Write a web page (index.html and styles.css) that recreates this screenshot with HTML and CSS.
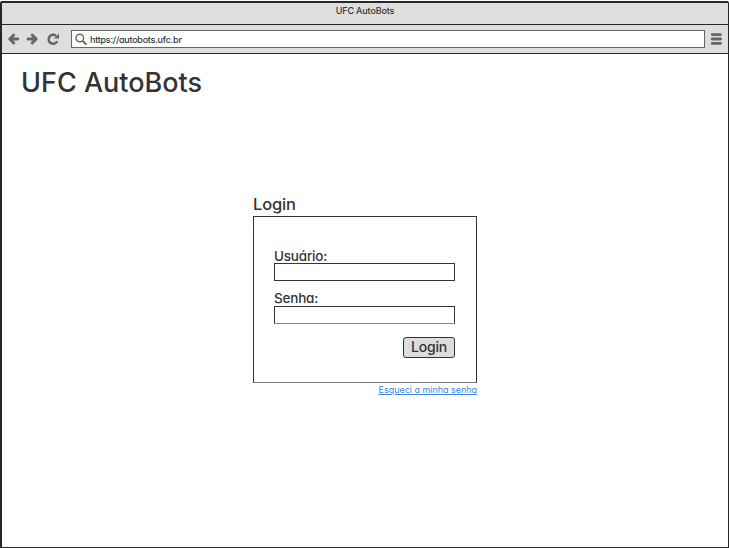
FILE: index.html
```html
<!DOCTYPE html>
<html lang="pt-BR">
<head>
<meta charset="utf-8">
<title>UFC AutoBots</title>
<link rel="stylesheet" href="styles.css">
</head>
<body>
<div class="window">
  <header class="titlebar"><span>UFC AutoBots</span></header>
  <nav class="toolbar">
    <svg class="nav-icons" width="54" height="14" viewBox="0 0 54 14" fill="none" stroke="#666" stroke-width="2.9" stroke-linecap="round" stroke-linejoin="round">
      <path d="M3 7H10.700M6.700 3L2.700 7L6.700 11"/>
      <path d="M21 7H28.500M25.200 3L29.200 7L25.200 11"/>
      <path d="M50.200 9.300A4.500 4.500 0 1 1 49 3.800" stroke-width="2.500" stroke-linecap="butt"/>
      <path d="M52 1.500V6.500H46.800Z" fill="#666" stroke="none"/>
    </svg>
    <div class="address">
      <svg class="search" width="13" height="13" viewBox="0 0 13 13" fill="none" stroke="#666">
        <circle cx="4.800" cy="5" r="3.800" stroke-width="1.400"/>
        <path d="M7.900 8.100L10.800 11" stroke-width="2" stroke-linecap="round"/>
      </svg>
      <span class="url">https://autobots.ufc.br</span>
    </div>
    <svg class="menu" width="12" height="14" viewBox="0 0 12 14" stroke="#666" stroke-width="2.900" stroke-linecap="round">
      <path d="M2.200 2.600H10.500M2.200 7H10.500M2.200 11.400H10.500"/>
    </svg>
  </nav>
  <main class="page">
    <h1>UFC AutoBots</h1>
    <section class="login">
      <h2>Login</h2>
      <form class="panel">
        <label for="user">Usuário:</label>
        <input id="user" type="text">
        <label class="second" for="pass">Senha:</label>
        <input id="pass" type="password">
        <button type="button"><span>Login</span></button>
      </form>
      <a href="#">Esqueci a minha senha</a>
    </section>
  </main>
</div>
</body>
</html>
```
FILE: styles.css
```css
* { box-sizing: border-box; }
body {
  margin: 0;
  padding-top: 1px;
  height: 548px;
  overflow: hidden;
  background: #fff;
  color: #333;
  font-family: Inter, "Liberation Sans", sans-serif;
  font-feature-settings: "cv11";
}
.window {
  height: 547px;
  border: solid #272727;
  border-width: 2px 1px 1px 2px;
  border-radius: 2px 2px 0 0;
}
.titlebar {
  height: 22px;
  padding-top: 2px;
  background: #dededd;
  border-bottom: 1px solid #272727;
  text-align: center;
  font-size: 9px;
  line-height: 12px;
  font-weight: 500;
  letter-spacing: -0.15px;
}
.toolbar {
  height: 29px;
  display: flex;
  align-items: center;
  padding: 0 6px 0 5px;
  background: #dededd;
  border-bottom: 1px solid #272727;
}
.address {
  flex: 1;
  height: 18px;
  margin: 0 5px 0 10px;
  display: flex;
  align-items: center;
  padding-left: 3px;
  background: #fff;
  border: 1px solid #666;
}
.url {
  margin: 2px 0 0 2px;
  font-size: 9px;
  line-height: 12px;
  font-weight: 500;
  letter-spacing: -0.26px;
}
.page { padding: 12px 0 0 19px; }
h1, h2 { margin: 0; font-weight: 500; }
h1 {
  font-size: 27px;
  line-height: 34px;
}
.login {
  width: 224px;
  margin: 95px 0 0 232px;
  display: flex;
  flex-direction: column;
}
h2 {
  height: 21px;
  font-size: 16.5px;
  line-height: 19px;
  letter-spacing: -0.2px;
}
.panel {
  height: 167px;
  padding: 32px 21px 0 20px;
  display: flex;
  flex-direction: column;
  border: 1px solid #333;
  border-bottom-color: #777;
}
label {
  height: 14px;
  font-size: 13.5px;
  line-height: 14px;
  font-weight: 500;
  letter-spacing: -0.2px;
}
.second { margin-top: 11px; line-height: 12px; }
input {
  height: 18px;
  border: 1px solid #333;
  border-radius: 0;
  padding: 0;
  background: #fff;
}
#pass { border-bottom-color: #888; }
button {
  align-self: flex-end;
  width: 52px;
  height: 21px;
  margin-top: 13px;
  padding: 0 0 2px;
  border: 1px solid #333;
  border-radius: 3px;
  background: #ddd;
  color: #333;
  font: 500 14px/17px Inter, sans-serif;
  letter-spacing: -0.2px;
}
a {
  align-self: flex-end;
  margin-top: 1px;
  color: #3c86e8;
  font-size: 9px;
  line-height: 12px;
  letter-spacing: -0.03px;
  text-underline-offset: 1px;
}
```
